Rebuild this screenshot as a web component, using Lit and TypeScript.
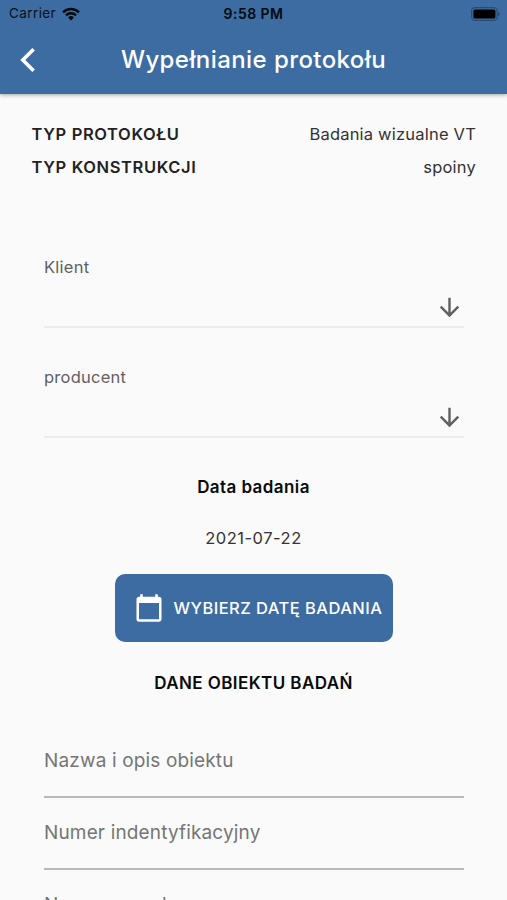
import { LitElement, html, css } from "lit";
import { customElement, property } from "lit/decorators.js";

@customElement("status-bar")
class StatusBar extends LitElement {
  static styles = css`
    :host { display: grid; grid-template-columns: 1fr auto 1fr; align-items: center; height: 27px; padding: 0 7px 0 9px; color: #0b1118; font-size: 13.5px; line-height: 27px; }
    .left { display: flex; align-items: center; gap: 6px; letter-spacing: 0.4px; }
    .time { margin-right: 2px; font-size: 14px; font-weight: 600; letter-spacing: 0.45px; color: #05080c; }
    .right { display: flex; justify-content: flex-end; }
    svg { display: block; }
  `;
  render() {
    return html`
      <div class="left">
        <span>Carrier</span>
        <svg width="18" height="14" viewBox="0 0 19 14">
          <g fill="none" stroke="#05080c" stroke-width="2.5">
            <path d="M1.1 5.2a12 12 0 0 1 16.8 0" />
            <path d="M4.2 8.4a7.6 7.6 0 0 1 10.6 0" />
          </g>
          <path fill="#05080c" d="M9.5 13.8 6.4 10.6a4.5 4.5 0 0 1 6.2 0z" />
        </svg>
      </div>
      <div class="time">9:58 PM</div>
      <div class="right">
        <svg width="29" height="14" viewBox="0 0 29 14">
          <rect x="0.6" y="0.6" width="25.6" height="12.8" rx="3.6" fill="none" stroke="#2b4c72" stroke-width="1.2" />
          <rect x="2.4" y="2.4" width="22" height="9.2" rx="1.6" fill="#000" />
          <path d="M27.2 4.8c2 .8 2 3.6 0 4.4z" fill="#2b4c72" />
        </svg>
      </div>`;
  }
}

@customElement("select-field")
class SelectField extends LitElement {
  @property() label = "";
  static styles = css`
    :host { display: flex; flex-direction: column; height: 110px; }
    .label { font-size: 16.5px; line-height: 20px; color: #616161; letter-spacing: 0.25px; }
    .control { display: flex; justify-content: flex-end; height: 51px; box-sizing: border-box; padding: 16px 0 0; border-bottom: 2px solid #ececec; }
    svg { display: block; width: 29px; height: 29px; }
  `;
  render() {
    return html`
      <div class="label">${this.label}</div>
      <div class="control">
        <svg viewBox="0 0 24 24" fill="#616161"><path d="M20 12l-1.41-1.41L13 16.17V4h-2v12.17l-5.58-5.59L4 12l8 8 8-8z" /></svg>
      </div>`;
  }
}

@customElement("text-field")
class TextField extends LitElement {
  @property() label = "";
  static styles = css`
    :host { display: flex; align-items: flex-start; box-sizing: border-box; height: 72px; padding-top: 23px; border-bottom: 2px solid #b9b9b9; font-size: 19px; line-height: 24px; color: #757575; letter-spacing: 0.15px; }
  `;
  render() {
    return html`<span>${this.label}</span>`;
  }
}

@customElement("app-root")
class AppRoot extends LitElement {
  static styles = css`
    :host { display: block; height: 900px; overflow: hidden; background: #fafafa; font-family: Inter, "Liberation Sans", sans-serif; color: #333; }
    .top { background: #3c6ca2; height: 94px; box-shadow: 0 1px 4px rgba(0, 0, 0, 0.35); }
    .bar { display: grid; grid-template-columns: 80px 1fr 80px; align-items: center; height: 66px; }
    .back { display: block; margin-left: 19px; }
    h1 { margin: 0; text-align: center; font-size: 24px; line-height: 30px; font-weight: 500; color: #fff; letter-spacing: 0.42px; white-space: nowrap; }
    .info { padding: 24px 31px 0 32px; }
    .row { display: flex; justify-content: space-between; height: 33px; line-height: 33px; font-size: 16.5px; }
    .key { font-weight: 600; color: #222; letter-spacing: 0.62px; margin-left: -0.5px; }
    .value { letter-spacing: 0.2px; }
    .selects { padding: 73px 43px 0 44px; }
    .center { display: flex; flex-direction: column; align-items: center; }
    .heading { font-size: 17px; line-height: 20px; font-weight: 600; color: #0a0a0a; letter-spacing: 0.42px; }
    .date { margin-top: 31px; font-size: 16.5px; line-height: 20px; letter-spacing: 0.5px; }
    .pick { display: flex; align-items: center; box-sizing: border-box; width: 278px; height: 68px; margin: 26px 0 31px; padding: 0 0 0 19px; gap: 10px; border: 0; border-radius: 10px; background: #3c6ca2; color: #fff; font: 500 16.5px/20px Inter, sans-serif; letter-spacing: 0.45px; white-space: nowrap; }
    .pick svg { flex: none; }
    .fields { padding: 33px 43px 0 44px; }
  `;
  render() {
    return html`
      <div class="top">
        <status-bar></status-bar>
        <div class="bar">
          <svg class="back" width="18" height="26" viewBox="0 0 18 26"><path d="M14.6 2.2 3.8 13l10.8 10.8" fill="none" stroke="#fff" stroke-width="3.6" /></svg>
          <h1>Wypełnianie protokołu</h1>
        </div>
      </div>
      <div class="info">
        <div class="row"><span class="key">TYP PROTOKOŁU</span><span class="value">Badania wizualne VT</span></div>
        <div class="row"><span class="key">TYP KONSTRUKCJI</span><span class="value">spoiny</span></div>
      </div>
      <div class="selects">
        <select-field label="Klient"></select-field>
        <select-field label="producent"></select-field>
      </div>
      <div class="center">
        <div class="heading">Data badania</div>
        <div class="date">2021-07-22</div>
        <button class="pick">
          <svg width="30" height="30" viewBox="0 0 24 24" fill="#fff"><path d="M20 3h-1V1h-2v2H7V1H5v2H4c-1.1 0-2 .9-2 2v16c0 1.1.9 2 2 2h16c1.1 0 2-.9 2-2V5c0-1.1-.9-2-2-2zm0 18H4V8h16v13z" /></svg>
          <span>WYBIERZ DATĘ BADANIA</span>
        </button>
        <div class="heading">DANE OBIEKTU BADAŃ</div>
      </div>
      <div class="fields">
        <text-field label="Nazwa i opis obiektu"></text-field>
        <text-field label="Numer indentyfikacyjny"></text-field>
        <text-field label="Numer rysunku"></text-field>
      </div>`;
  }
}
